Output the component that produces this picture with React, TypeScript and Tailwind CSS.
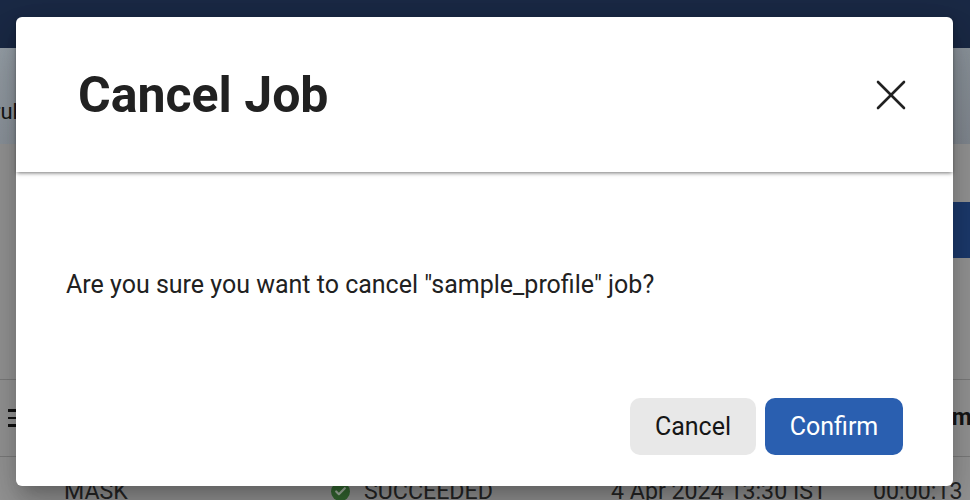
import { X, Check } from "lucide-react";

const App = () => {
  return (
    <div className="relative h-[500px] w-full overflow-hidden bg-[#979797] font-['Roboto',sans-serif] text-[#161616]">
      {/* Page behind the dialog */}
      <header className="h-12 bg-[#1a2945]" />
      <div className="flex h-24 items-center bg-gradient-to-br from-[#98a1a9] to-[#838a92] text-[22px]">
        <span className="-ml-[7px] mt-[30px]">rul</span>
      </div>
      <div className="flex h-[236px] justify-end border-b border-[#7d7d7d] pt-[58px]">
        <div className="h-14 w-[70px] bg-[#1c3a6e] pt-[10px] text-[26px] text-[#a9a9a9]">
          <span className="ml-[2px]">ne</span>
        </div>
      </div>
      <div className="flex h-[77px] items-center justify-between border-b border-[#7d7d7d] pl-2 text-[23px] font-bold">
        <div className="flex w-[12px] flex-col gap-[5px]">
          <span className="h-[2.5px] bg-[#111]" />
          <span className="h-[2.5px] bg-[#111]" />
          <span className="h-[2.5px] bg-[#111]" />
        </div>
        <span className="-mr-[14px]">me</span>
      </div>
      <div className="flex h-10 items-start pt-[22px] text-[23.2px] leading-6 text-[#262626]">
        <span className="ml-16 w-[267px]">MASK</span>
        <span className="flex w-[280px] items-center gap-[14px]">
          <span className="flex size-[19px] items-center justify-center rounded-full bg-[#356b32]">
            <Check className="size-[13px] text-[#a8b8a6]" strokeWidth={4} />
          </span>
          SUCCEEDED
        </span>
        <span className="w-[262px]">4 Apr 2024 13:30 IST</span>
        <span>00:00:13</span>
      </div>

      {/* Dialog */}
      <div className="absolute left-4 top-[17px] flex h-[469px] w-[937px] flex-col rounded-[6px] bg-white shadow-[0_11px_15px_-7px_rgba(0,0,0,0.2),0_24px_38px_3px_rgba(0,0,0,0.14),0_9px_46px_8px_rgba(0,0,0,0.12)]">
        <div className="flex h-[155px] items-center justify-between pl-[62px] pr-[36px] shadow-[0_2px_4px_-1px_rgba(0,0,0,0.55)]">
          <h2 className="text-[50px] font-bold leading-none text-[#212121]">Cancel Job</h2>
          <X className="size-[52px] text-[#212121]" strokeWidth={1.2} />
        </div>
        <div className="flex flex-1 flex-col justify-between pb-[31px] pl-[50px] pr-[50px] pt-[95px]">
          <p className="text-[25px] leading-[36px] text-[#212121]">
            Are you sure you want to cancel "sample_profile" job?
          </p>
          <div className="flex justify-end gap-[9px]">
            <button className="h-[57px] w-[126px] rounded-[10px] bg-[#e8e8e8] text-[25px] text-[#161616]">
              Cancel
            </button>
            <button className="h-[57px] w-[138px] rounded-[10px] bg-[#2a5fb0] text-[25px] text-white">
              Confirm
            </button>
          </div>
        </div>
      </div>
    </div>
  );
};

export default App;
